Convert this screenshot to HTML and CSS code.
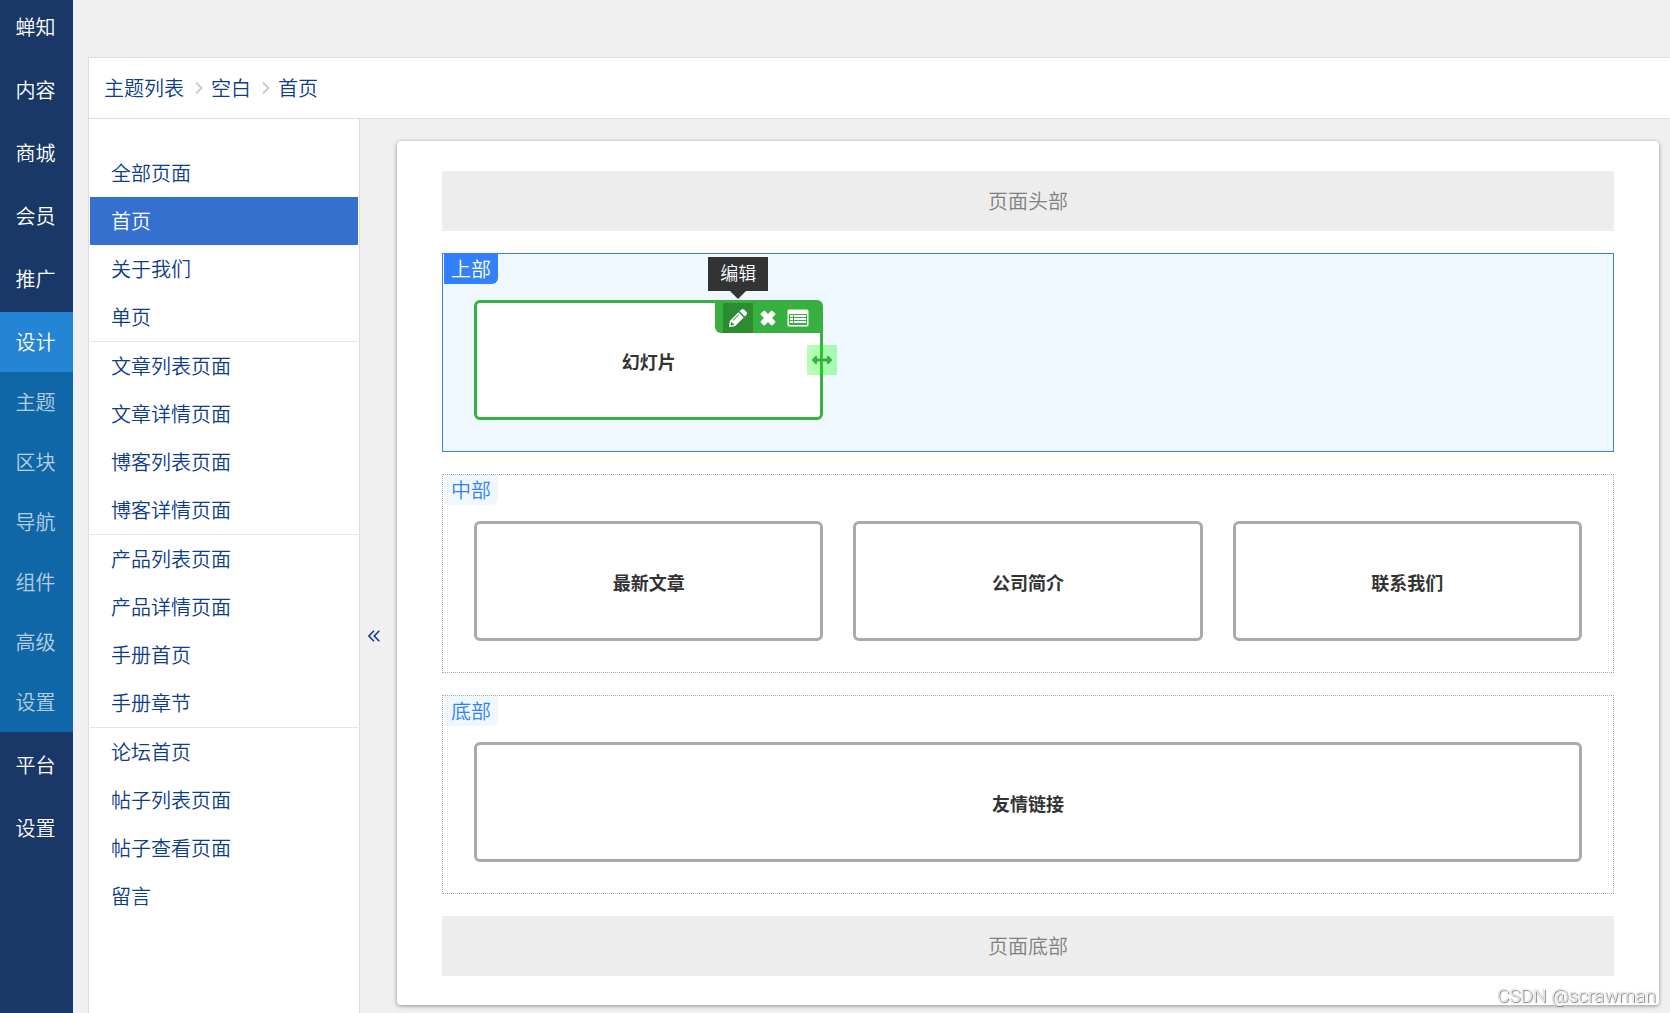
FILE: index.html
```html
<!DOCTYPE html>
<html lang="zh-CN">
<head>
<meta charset="utf-8">
<meta name="viewport" content="width=device-width, initial-scale=1">
<title>蝉知 - 首页</title>
<link rel="stylesheet" href="styles.css">
</head>
<body>
<div class="app">
  <nav class="mainnav">
    <a class="mainnav-item brand" href="#">蝉知</a>
    <a class="mainnav-item" href="#">内容</a>
    <a class="mainnav-item" href="#">商城</a>
    <a class="mainnav-item" href="#">会员</a>
    <a class="mainnav-item" href="#">推广</a>
    <div class="mainnav-group">
      <a class="mainnav-item active" href="#">设计</a>
      <a class="mainnav-item sub" href="#">主题</a>
      <a class="mainnav-item sub" href="#">区块</a>
      <a class="mainnav-item sub" href="#">导航</a>
      <a class="mainnav-item sub" href="#">组件</a>
      <a class="mainnav-item sub" href="#">高级</a>
      <a class="mainnav-item sub" href="#">设置</a>
    </div>
    <a class="mainnav-item" href="#">平台</a>
    <a class="mainnav-item" href="#">设置</a>
  </nav>

  <main class="panel">
    <header class="breadcrumb">
      <a href="#">主题列表</a>
      <svg class="sep" viewBox="0 0 8 14" aria-hidden="true"><path d="M1 1.5 6.5 7 1 12.5"/></svg>
      <a href="#">空白</a>
      <svg class="sep" viewBox="0 0 8 14" aria-hidden="true"><path d="M1 1.5 6.5 7 1 12.5"/></svg>
      <a href="#">首页</a>
    </header>

    <div class="workspace">
      <aside class="pages">
        <ul class="page-group">
          <li><a href="#">全部页面</a></li>
          <li><a class="selected" href="#">首页</a></li>
          <li><a href="#">关于我们</a></li>
          <li><a href="#">单页</a></li>
        </ul>
        <ul class="page-group">
          <li><a href="#">文章列表页面</a></li>
          <li><a href="#">文章详情页面</a></li>
          <li><a href="#">博客列表页面</a></li>
          <li><a href="#">博客详情页面</a></li>
        </ul>
        <ul class="page-group">
          <li><a href="#">产品列表页面</a></li>
          <li><a href="#">产品详情页面</a></li>
          <li><a href="#">手册首页</a></li>
          <li><a href="#">手册章节</a></li>
        </ul>
        <ul class="page-group">
          <li><a href="#">论坛首页</a></li>
          <li><a href="#">帖子列表页面</a></li>
          <li><a href="#">帖子查看页面</a></li>
          <li><a href="#">留言</a></li>
        </ul>
      </aside>

      <button class="collapse" type="button" aria-label="收起">
        <svg viewBox="0 0 12 12" aria-hidden="true"><path d="M6 .8.9 6 6 11.200M11.300.8 6.200 6l5.100 5.200"/></svg>
      </button>

      <div class="canvas">
        <div class="page-edge">页面头部</div>

        <section class="region current">
          <h2 class="region-name">上部</h2>
          <div class="blocks">
            <div class="block editing">
              <span class="block-title">幻灯片</span>
              <div class="tools">
                <button class="tool on" type="button" aria-label="编辑">
                  <svg viewBox="0 0 20 20" aria-hidden="true"><path fill-rule="evenodd" d="M1 19l.8-6L10.500 4.300l5.200 5.200L7 18.200zM11.600 3.200l1.800-1.800q1.300-1 2.600 0l2.600 2.600q1 1.300 0 2.600l-1.800 1.800zM3 14.200l-.4 2.400.8.800 2.400-.4v-1.400H4.400v-1.400zM10.600 6.200l-6 6 .6.600 6-6z"/></svg>
                  <span class="tip" role="tooltip">编辑</span>
                </button>
                <button class="tool" type="button" aria-label="删除">
                  <svg viewBox="0 0 20 20" aria-hidden="true"><path d="M3 5.300 5.300 3q.9-.8 1.800 0L10 6l2.900-3q.9-.8 1.800 0L17 5.300q.8.900 0 1.800L14.100 10l2.900 2.900q.8.900 0 1.800L14.700 17q-.9.800-1.800 0L10 14l-2.900 3q-.9.800-1.800 0L3 14.700q-.8-.9 0-1.800L5.900 10 3 7.100q-.8-.9 0-1.800z"/></svg>
                </button>
                <button class="tool" type="button" aria-label="布局">
                  <svg class="wide" viewBox="0 0 22 18" aria-hidden="true"><path fill-rule="evenodd" d="M2 .5h18q1.500 0 1.500 1.500v14q0 1.500-1.500 1.500H2Q.5 17.500.5 16V2Q.5.500 2 .5zM2 5v11h18V5z"/><path d="M3 6h3v2H3zM7 6h12v2H7zM3 9h3v2H3zM7 9h12v2H7zM3 12h3v2H3zM7 12h12v2H7z"/></svg>
                </button>
              </div>
              <span class="resize">
                <svg viewBox="0 0 22 10" aria-hidden="true"><path d="M.5 5 4.500 1q1-.6 1.500.5v2h10v-2q.5-1.100 1.500-.5l4 4-4 4q-1 .6-1.500-.5v-2H6v2Q5.500 9.600 4.500 9z"/></svg>
              </span>
            </div>
          </div>
        </section>

        <section class="region">
          <h2 class="region-name">中部</h2>
          <div class="blocks">
            <div class="block"><span class="block-title">最新文章</span></div>
            <div class="block"><span class="block-title">公司简介</span></div>
            <div class="block"><span class="block-title">联系我们</span></div>
          </div>
        </section>

        <section class="region">
          <h2 class="region-name">底部</h2>
          <div class="blocks">
            <div class="block full"><span class="block-title">友情链接</span></div>
          </div>
        </section>

        <div class="page-edge">页面底部</div>
      </div>
    </div>
  </main>
</div>
<div class="watermark">CSDN @scrawman</div>
</body>
</html>
```
FILE: styles.css
```css
* {
  box-sizing: border-box;
}

body {
  margin: 0;
  background: #f0f0f0;
  color: #333;
  font: 350 20px/30px "Noto Sans CJK SC", sans-serif;
}

a {
  color: #0d3d88;
  text-decoration: none;
}

button {
  padding: 0;
  border: 0;
  background: none;
  font: inherit;
  cursor: pointer;
}

svg {
  display: block;
}

.app {
  display: flex;
  min-height: 100vh;
}

/* Main navigation */
.mainnav {
  display: flex;
  flex: none;
  flex-direction: column;
  gap: 3px;
  width: 73px;
  background: #1a3867;
}

.mainnav-item {
  display: block;
  padding-right: 2px;
  color: #fff;
  line-height: 60px;
  text-align: center;
  white-space: nowrap;
}

.mainnav-item.brand {
  height: 57px;
  line-height: 54px;
}

.mainnav-group {
  background: #1067a8;
}

.mainnav-item.active {
  background: #2385d3;
}

.mainnav-item.sub {
  color: rgba(255, 255, 255, .7);
}

/* Content panel */
.panel {
  display: flex;
  flex: 1;
  flex-direction: column;
  min-width: 0;
  margin: 57px 0 0 15px;
  border: solid #ddd;
  border-width: 1px 0 0 1px;
}

.breadcrumb {
  display: flex;
  align-items: center;
  height: 61px;
  padding-left: 15px;
  border-bottom: 1px solid #ddd;
  background: #fff;
}

.sep {
  width: 8px;
  height: 14px;
  margin: 0 8px 0 11px;
  fill: none;
  stroke: #ccc;
  stroke-width: 2;
}

.workspace {
  display: flex;
  flex: 1;
}

/* Page list */
.pages {
  flex: none;
  width: 271px;
  padding: 30px 1px 0;
  border-right: 1px solid #ddd;
  background: #fff;
}

.page-group {
  margin: 0;
  padding: 0;
  list-style: none;
}

.page-group + .page-group {
  border-top: 1px solid #e5e5e5;
}

.page-group a {
  display: block;
  padding-left: 21px;
  line-height: 48px;
}

.page-group a.selected {
  background: #3570cf;
  color: #fff;
}

.collapse {
  display: flex;
  flex: none;
  justify-content: center;
  align-items: center;
  width: 37px;
  padding: 140px 10px 0 0;
}

.collapse svg {
  width: 12px;
  height: 12px;
  fill: none;
  stroke: #0d3d88;
  stroke-width: 1.6;
}

/* Layout canvas */
.canvas {
  display: flex;
  flex: 1;
  flex-direction: column;
  gap: 22px;
  min-width: 0;
  margin: 22px 11px 8px 0;
  padding: 30px 45px 29px;
  border-radius: 4px;
  background: #fff;
  box-shadow: 0 1px 4px rgba(0, 0, 0, .4);
}

.page-edge {
  background: #ededed;
  color: #808080;
  line-height: 60px;
  text-align: center;
}

.region {
  padding: 0 31px 31px 1px;
  border: 1px dotted #aaa;
}

.region-name {
  width: 54px;
  margin: 0;
  border-radius: 0 0 6px 0;
  background: #eff7ff;
  color: #3280fc;
  font-size: 20px;
  font-weight: 350;
  line-height: 30px;
  text-align: center;
}

.blocks {
  display: grid;
  grid-template-columns: repeat(3, 1fr);
  gap: 30px;
  padding: 16px 0 0 30px;
}

.block {
  position: relative;
  display: flex;
  align-items: center;
  justify-content: center;
  height: 120px;
  padding-top: 2px;
  border: 3px solid #aaa;
  border-radius: 6px;
  background: #fff;
}

.block.full {
  grid-column: 1 / -1;
}

.block-title {
  font-size: 18px;
  font-weight: 700;
}

.region.current {
  border: 1px solid #3280fc;
  background: #eff7ff;
}

.current .region-name {
  background: #3280fc;
  color: #fff;
}

.block.editing {
  border-color: #38b03f;
}

/* Block toolbar */
.tools {
  position: absolute;
  top: 0;
  right: 0;
  display: flex;
  padding: 0 7px 0 8px;
  border-bottom-left-radius: 6px;
  background: #38b03f;
}

.tool {
  position: relative;
  display: flex;
  align-items: center;
  justify-content: center;
  width: 30px;
  height: 30px;
}

.tool.on {
  background: #2d8c32;
}

.tool svg {
  width: 20px;
  height: 20px;
  fill: #fff;
}

.tool .wide {
  width: 22px;
  height: 18px;
}

.tip {
  position: absolute;
  bottom: 42px;
  left: 50%;
  width: 60px;
  margin-left: -30px;
  padding-bottom: 4px;
  background: #333;
  color: #fff;
  font-size: 18px;
  line-height: 30px;
  text-align: center;
}

.tip::after {
  position: absolute;
  top: 100%;
  left: 50%;
  margin-left: -8px;
  border: solid transparent;
  border-width: 8px 8px 0;
  border-top-color: #333;
  content: "";
}

.resize {
  position: absolute;
  top: 42px;
  right: -17px;
  display: flex;
  align-items: center;
  justify-content: center;
  width: 30px;
  height: 30px;
  background: rgba(0, 255, 0, .3);
  cursor: ew-resize;
}

.resize svg {
  width: 22px;
  height: 10px;
  fill: #38b03f;
}

.watermark {
  position: fixed;
  right: 14px;
  bottom: 2px;
  color: #f4f4f4;
  font: 300 19px/30px Roboto, "Liberation Sans", sans-serif;
  text-shadow: 1px 1px 1px #777, 0 0 1px #999;
}
```
